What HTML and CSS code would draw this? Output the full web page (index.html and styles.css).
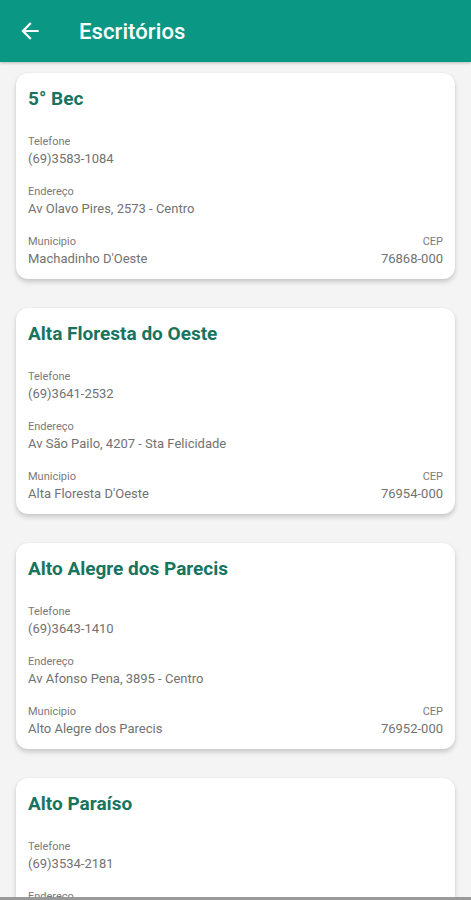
FILE: index.html
```html
<!DOCTYPE html>
<html lang="pt">
<head>
<meta charset="utf-8">
<title>Escritórios</title>
<link rel="stylesheet" href="styles.css">
</head>
<body>
<header class="appbar">
  <svg class="back" width="26" height="26" viewBox="0 0 24 24"><path d="M20 11H7.83l5.59-5.59L12 4l-8 8 8 8 1.41-1.41L7.83 13H20v-2z" fill="#fff"/></svg>
  <h1 class="appbar-title">Escritórios</h1>
</header>
<main class="list">
  <section class="card">
    <h2 class="card-title">5° Bec</h2>
    <div class="field"><span class="label">Telefone</span><span class="value">(69)3583-1084</span></div>
    <div class="field"><span class="label">Endereço</span><span class="value">Av Olavo Pires, 2573 - Centro</span></div>
    <div class="row">
      <div class="field"><span class="label">Municipio</span><span class="value">Machadinho D'Oeste</span></div>
      <div class="field right"><span class="label">CEP</span><span class="value">76868-000</span></div>
    </div>
  </section>
  <section class="card">
    <h2 class="card-title">Alta Floresta do Oeste</h2>
    <div class="field"><span class="label">Telefone</span><span class="value">(69)3641-2532</span></div>
    <div class="field"><span class="label">Endereço</span><span class="value">Av São Pailo, 4207 - Sta Felicidade</span></div>
    <div class="row">
      <div class="field"><span class="label">Municipio</span><span class="value">Alta Floresta D'Oeste</span></div>
      <div class="field right"><span class="label">CEP</span><span class="value">76954-000</span></div>
    </div>
  </section>
  <section class="card">
    <h2 class="card-title">Alto Alegre dos Parecis</h2>
    <div class="field"><span class="label">Telefone</span><span class="value">(69)3643-1410</span></div>
    <div class="field"><span class="label">Endereço</span><span class="value">Av Afonso Pena, 3895 - Centro</span></div>
    <div class="row">
      <div class="field"><span class="label">Municipio</span><span class="value">Alto Alegre dos Parecis</span></div>
      <div class="field right"><span class="label">CEP</span><span class="value">76952-000</span></div>
    </div>
  </section>
  <section class="card">
    <h2 class="card-title">Alto Paraíso</h2>
    <div class="field"><span class="label">Telefone</span><span class="value">(69)3534-2181</span></div>
    <div class="field"><span class="label">Endereço</span><span class="value">Av Tancredo Neves, 2150 - Centro</span></div>
    <div class="row">
      <div class="field"><span class="label">Municipio</span><span class="value">Alto Paraíso</span></div>
      <div class="field right"><span class="label">CEP</span><span class="value">76862-000</span></div>
    </div>
  </section>
</main>
<div class="bottom-edge"></div>
</body>
</html>
```
FILE: styles.css
```css
html, body {
  margin: 0;
  padding: 0;
  height: 900px;
  overflow: hidden;
}
body {
  background: #f4f4f4;
  font-family: Roboto, "Noto Sans", "Liberation Sans", sans-serif;
}
.appbar {
  height: 62px;
  background: #0a9885;
  display: flex;
  align-items: center;
  padding-left: 17px;
  box-shadow: 0 1px 3px rgba(0,0,0,0.25);
  position: relative;
  z-index: 2;
}
.back {
  display: block;
}
.appbar-title {
  margin: 0 0 0 36px;
  color: #fff;
  font-size: 22px;
  font-weight: 500;
  letter-spacing: 0.1px;
}
.list {
  display: flex;
  flex-direction: column;
  gap: 29px;
  padding: 11px 16px 0;
}
.card {
  background: #fff;
  border-radius: 12px;
  box-shadow: 0 3px 5px rgba(0,0,0,0.18), 0 0 2px rgba(0,0,0,0.06);
  padding: 14px 12px 12px;
  height: 206px;
  box-sizing: border-box;
  display: flex;
  flex-direction: column;
}
.card-title {
  margin: 0 0 24px;
  font-size: 19px;
  font-weight: 700;
  color: #16745f;
  line-height: 24px;
}
.field {
  display: flex;
  flex-direction: column;
  margin-bottom: 17px;
}
.row {
  display: flex;
  justify-content: space-between;
}
.row .field { margin-bottom: 0; }
.right { align-items: flex-end; }
.label {
  font-size: 11px;
  line-height: 14px;
  color: #7a7a7a;
}
.value {
  font-size: 13px;
  line-height: 19px;
  color: #727272;
}
.bottom-edge {
  position: fixed;
  left: 0;
  right: 0;
  bottom: 0;
  height: 3px;
  background: #9a9a9a;
}
```
